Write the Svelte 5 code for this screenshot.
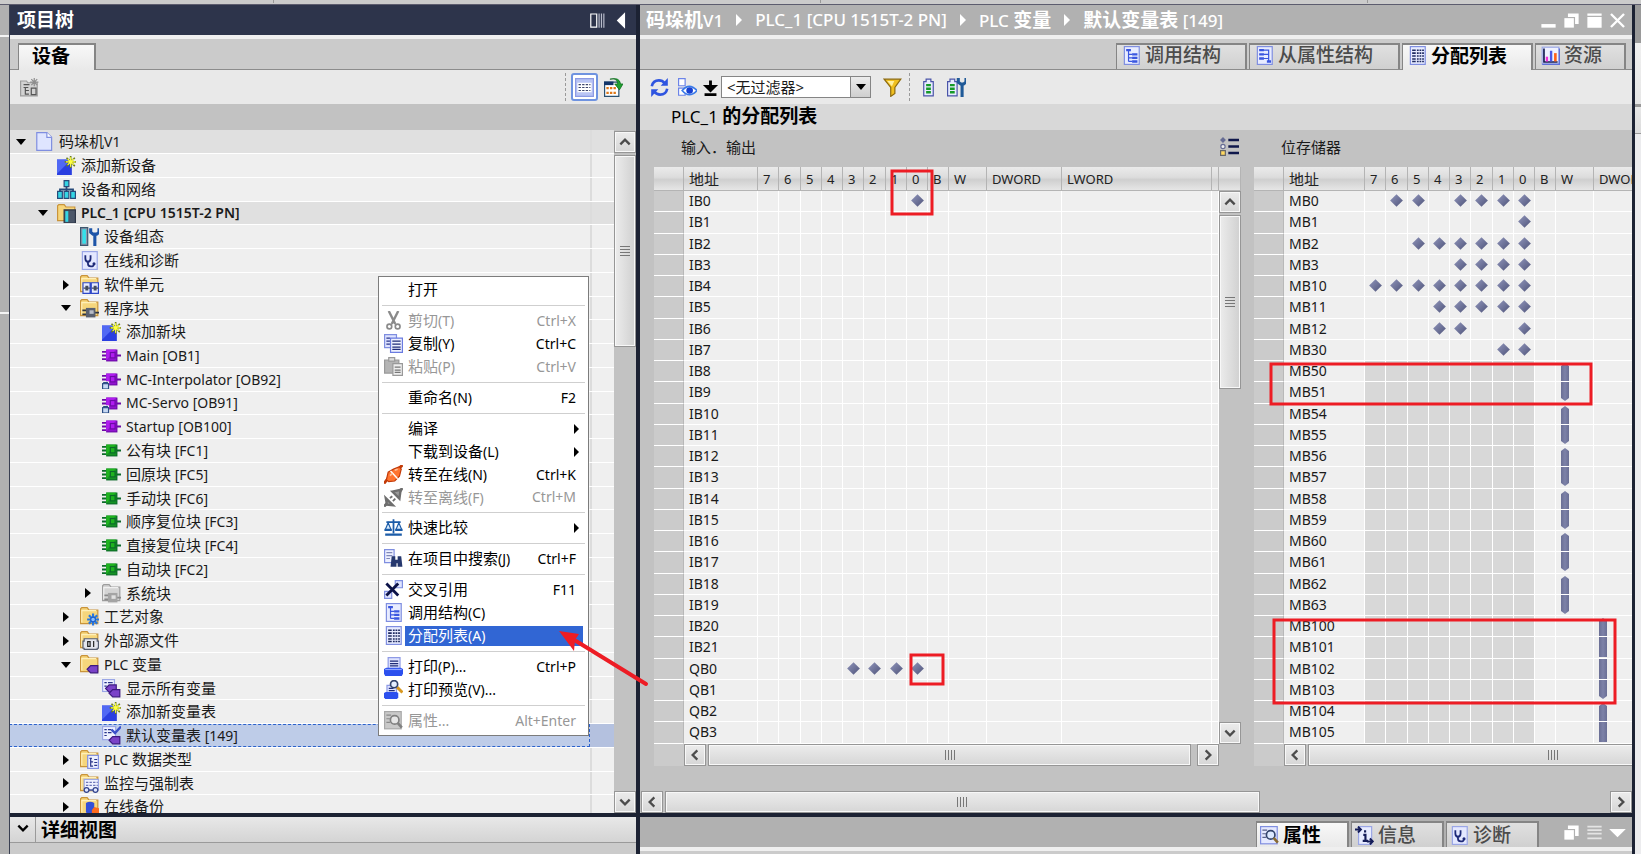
<script lang="ts">
  type TreeNode = { text: string; icon: string; level: number; open?: boolean; head?: boolean; strong?: boolean; selected?: boolean };
  type Row = { addr: string; bits: number[]; col?: string; part?: string };

  const tree: TreeNode[] = [
    { text: '码垛机V1', icon: 'page', level: 0, open: true, head: true },
    { text: '添加新设备', icon: 'add', level: 1 },
    { text: '设备和网络', icon: 'network', level: 1 },
    { text: 'PLC_1 [CPU 1515T-2 PN]', icon: 'plc', level: 1, open: true, head: true, strong: true },
    { text: '设备组态', icon: 'config', level: 2 },
    { text: '在线和诊断', icon: 'diag', level: 2 },
    { text: '软件单元', icon: 'f-unit', level: 2, open: false },
    { text: '程序块', icon: 'f-block', level: 2, open: true },
    { text: '添加新块', icon: 'add', level: 3 },
    { text: 'Main [OB1]', icon: 'ob', level: 3 },
    { text: 'MC-Interpolator [OB92]', icon: 'ob-lock', level: 3 },
    { text: 'MC-Servo [OB91]', icon: 'ob-lock', level: 3 },
    { text: 'Startup [OB100]', icon: 'ob', level: 3 },
    { text: '公有块 [FC1]', icon: 'fc', level: 3 },
    { text: '回原块 [FC5]', icon: 'fc', level: 3 },
    { text: '手动块 [FC6]', icon: 'fc', level: 3 },
    { text: '顺序复位块 [FC3]', icon: 'fc', level: 3 },
    { text: '直接复位块 [FC4]', icon: 'fc', level: 3 },
    { text: '自动块 [FC2]', icon: 'fc', level: 3 },
    { text: '系统块', icon: 'f-system', level: 3, open: false },
    { text: '工艺对象', icon: 'f-tech', level: 2, open: false },
    { text: '外部源文件', icon: 'f-source', level: 2, open: false },
    { text: 'PLC 变量', icon: 'f-tag', level: 2, open: true },
    { text: '显示所有变量', icon: 'tags', level: 3 },
    { text: '添加新变量表', icon: 'add', level: 3 },
    { text: '默认变量表 [149]', icon: 'tagtable', level: 3, selected: true },
    { text: 'PLC 数据类型', icon: 'f-type', level: 2, open: false },
    { text: '监控与强制表', icon: 'f-watch', level: 2, open: false },
    { text: '在线备份', icon: 'f-backup', level: 2, open: false }
  ];

  const menu = [
    [{ text: '打开' }],
    [
      { text: '剪切(T)', key: 'Ctrl+X', icon: 'cut', off: true },
      { text: '复制(Y)', key: 'Ctrl+C', icon: 'copy' },
      { text: '粘贴(P)', key: 'Ctrl+V', icon: 'paste', off: true }
    ],
    [{ text: '重命名(N)', key: 'F2' }],
    [
      { text: '编译', sub: true },
      { text: '下载到设备(L)', sub: true },
      { text: '转至在线(N)', key: 'Ctrl+K', icon: 'online' },
      { text: '转至离线(F)', key: 'Ctrl+M', icon: 'offline', off: true }
    ],
    [{ text: '快速比较', icon: 'scales', sub: true }],
    [{ text: '在项目中搜索(J)', key: 'Ctrl+F', icon: 'find' }],
    [
      { text: '交叉引用', key: 'F11', icon: 'cross' },
      { text: '调用结构(C)', icon: 'calls' },
      { text: '分配列表(A)', icon: 'list', active: true }
    ],
    [
      { text: '打印(P)...', key: 'Ctrl+P', icon: 'print' },
      { text: '打印预览(V)...', icon: 'preview' }
    ],
    [{ text: '属性...', key: 'Alt+Enter', icon: 'props-off', off: true }]
  ] as { text: string; key?: string; icon?: string; off?: boolean; sub?: boolean; active?: boolean }[][];

  const bitNumbers = [7, 6, 5, 4, 3, 2, 1, 0];

  const ioRows: Row[] = [];
  for (let i = 0; i < 22; i++) ioRows.push({ addr: 'IB' + i, bits: i === 0 ? [0] : [] });
  for (let i = 0; i < 4; i++) ioRows.push({ addr: 'QB' + i, bits: i === 0 ? [3, 2, 1, 0] : [] });

  const memRows: Row[] = [
    { addr: 'MB0', bits: [6, 5, 3, 2, 1, 0] },
    { addr: 'MB1', bits: [0] },
    { addr: 'MB2', bits: [5, 4, 3, 2, 1, 0] },
    { addr: 'MB3', bits: [3, 2, 1, 0] },
    { addr: 'MB10', bits: [7, 6, 5, 4, 3, 2, 1, 0] },
    { addr: 'MB11', bits: [4, 3, 2, 1, 0] },
    { addr: 'MB12', bits: [4, 3, 0] },
    { addr: 'MB30', bits: [1, 0] }
  ];
  for (const n of [50, 54, 56, 58, 60, 62]) {
    memRows.push({ addr: 'MB' + n, bits: [], col: 'W', part: 'first' });
    memRows.push({ addr: 'MB' + (n + 1), bits: [], col: 'W', part: 'last' });
  }
  const dwordParts = ['first', 'mid', 'mid', 'last', 'first', 'mid'];
  dwordParts.forEach((part, i) => memRows.push({ addr: 'MB' + (100 + i), bits: [], col: 'DWORD', part }));

  const crumbs = ['码垛机V1', 'PLC_1 [CPU 1515T-2 PN]', 'PLC 变量', '默认变量表 [149]'];
  const tabs = [
    { text: '调用结构', icon: 'calls' },
    { text: '从属性结构', icon: 'depends' },
    { text: '分配列表', icon: 'list' },
    { text: '资源', icon: 'chart' }
  ];
  let activeTab = $state(2);
  let filter = $state('none');

  // Chinese and Latin runs are set in slightly different sizes
  function runs(text: string) {
    return text.match(/[\u2e80-\uffef]+|[^\u2e80-\uffef]+/g) ?? [];
  }
</script>

{#snippet mixed(text: string)}<span class="mixed">{#each runs(text) as run}<span class:cjk={run.charCodeAt(0) > 0x2e7f}>{run}</span>{/each}</span>{/snippet}

{#snippet sheet()}
  <rect x="1" y="1" width="14" height="14" fill="#eef1ff" stroke="#9aa6e6" />
  <path d="M1 15.5h14.5V2" stroke="#5d6fd8" fill="none" />
{/snippet}

{#snippet block(fill: string, dark: string)}
  <path d="M0 5h5M0 8h5M0 11h5M12 8h4" stroke={dark} stroke-width="1.5" />
  <rect x="3.5" y="3" width="9.5" height="10" fill={dark} />
  <rect x="3.5" y="3" width="8.5" height="9" fill={fill} />
  <path d="M3.500 12L12 3v9z" fill={dark} opacity=".45" />
  <rect x="7" y="5.5" width="4" height="4.5" fill={fill} stroke={dark} />
{/snippet}

{#snippet tag(x: number, y: number)}
  <path d="M{x} {y + 3}l3-3h6v6h-6z" fill="#7a42c8" stroke="#3c1980" />
{/snippet}

{#snippet icon(name: string)}
  <svg class="icon" viewBox="0 0 16 16" aria-hidden="true">
    {#if name.startsWith('f-')}
      {@const grey = name === 'f-system'}
      <path d="M.5 14V1.5l1-1H6l1.5 2h7.5V14z" fill={grey ? '#d4d4d4' : '#f6d67c'} stroke={grey ? '#9d9d9d' : '#c9943a'} />
      <path d="M1.5 13V3h12" fill="none" stroke={grey ? '#f0f0f0' : '#fff0b8'} />
    {/if}
    {#if name === 'page'}
      <path d="M1.5.5h8.5l4 4v11h-12.5z" fill="#dfe5ff" stroke="#7f8ee0" />
      <path d="M10 .5v4h4" fill="#fff" stroke="#7f8ee0" />
    {:else if name === 'add'}
      <rect x="0" y="3" width="12.5" height="13" fill="#2a3fe0" />
      <path d="M0 3h12L0 15z" fill="#5068f4" />
      <path d="M11.500 0v10M6.500 5h10M8 1.500l7 7M15 1.500l-7 7" stroke="#6b7d1c" stroke-width="1.400" />
      <path d="M11.500 1v8M7.500 5h8M9 2.500l5 5M14 2.500l-5 5" stroke="#ffff42" />
    {:else if name === 'network'}
      <path d="M8 5v4M2.500 10V8h11v2M8 8v3" stroke="#274b7a" stroke-width="1.500" fill="none" />
      <path d="M6 .5h4v5H6zM.5 9.500h4v6h-4zM6 9.500h4v6H6zM11.500 9.500h4v6h-4z" fill="#35d5e4" stroke="#274b7a" />
    {:else if name === 'plc'}
      <path d="M.5 14V1.500l1-1H6l1.500 2h7.500V14z" fill="#f6d67c" stroke="#c9943a" />
      <path d="M6 5h9.500v11H6z" fill="#4b5668" stroke="#2c3546" />
      <path d="M7 6h2.500v9H7z" fill="#35d5e4" />
    {:else if name === 'config'}
      <path d="M.5.5h6v15h-6z" fill="#8b9bb0" stroke="#3d556d" />
      <path d="M2 2h3v12H2z" fill="#35e0ea" />
      <path d="M9 1v3.500l2 1.500h3l2-1.500V1M12.500 6v10" stroke="#1e55a8" stroke-width="2.600" fill="none" />
    {:else if name === 'diag'}
      <rect x="2" y=".5" width="12.500" height="15" fill="#e4e8ff" stroke="#9aa6e6" />
      <path d="M4.500 3.500v2.500q0 3 2.200 3t2.200-3V3.500M6.700 9v1.500q0 2.500 2.500 2.500t2.300-1.500" stroke="#1e2a78" stroke-width="1.500" fill="none" />
      <circle cx="11.800" cy="10.800" r="1.300" fill="#1e2a78" />
    {:else if name === 'f-unit'}
      <path d="M2.500 6.500h6v9h-6zM9.500 6.500h6v9h-6z" fill="#e8ecff" stroke="#2f48c8" />
      <path d="M3 11h2M6.500 11h2M10 11h2M13.500 11h2" stroke="#444c60" />
      <path d="M4.500 9h2.500v4H4.500zM11.500 9H14v4h-2.500z" fill="#444c60" />
    {:else if name === 'f-block' || name === 'f-system'}
      <path d="M2 9.500h4M2 13h4M12 11.500h4" stroke={name === 'f-block' ? '#2e3440' : '#8a8a8a'} stroke-width="1.500" />
      <rect x="5" y="7.500" width="8" height="8" fill={name === 'f-block' ? '#596070' : '#a4a4a4'} />
      <rect x="8" y="9.500" width="3.500" height="3" fill={name === 'f-block' ? '#b8bcc8' : '#e0e0e0'} />
    {:else if name === 'ob' || name === 'ob-lock'}
      {@render block('#b01cf0', '#6c0aa6')}
      {#if name === 'ob-lock'}
        <path d="M0 9.500h6V16H0z" fill="#efefef" />
        <path d="M1.500 12v-1.500h3V12" stroke="#2a4d84" fill="none" />
        <rect x=".5" y="11.500" width="5" height="4.500" fill="#c7d9f4" stroke="#2a4d84" />
      {/if}
    {:else if name === 'fc'}
      {@render block('#1fb41f', '#0c6a2a')}
    {:else if name === 'f-tech'}
      <path d="M11 5.500v10M6 10.500h10M7.500 7l7 7M14.500 7l-7 7" stroke="#2878e0" stroke-width="1.800" />
      <circle cx="11" cy="10.500" r="2" fill="#8cc0ff" stroke="#2060c8" />
    {:else if name === 'f-source'}
      <path d="M3.500 8.500v-2h11v2h1v6h-1v1h-11v-1h-1v-6z" fill="#e4e6ee" stroke="#555d70" />
      <path d="M6.500 9h2v4h-2zM11.500 8.500v5" fill="none" stroke="#222" />
    {:else if name === 'f-tag'}
      {@render tag(6, 9)}
    {:else if name === 'tags'}
      <rect x=".5" y=".5" width="10" height="10" fill="#eef1ff" stroke="#9aa6e6" />
      <path d="M2 3h2M2 6h2M5 3h4M5 6h4" stroke="#28348a" />
      {@render tag(3, 5)}
      {@render tag(6, 9)}
    {:else if name === 'tagtable'}
      <rect x=".5" y=".5" width="11" height="11" fill="#eef1ff" stroke="#9aa6e6" />
      <path d="M2 3h2M2 5.500h2M2 8h2M5 3h3M5 5.500h3" stroke="#28348a" />
      <path d="M8 3l3 3 5-5.500" stroke="#3b50c8" stroke-width="2" fill="none" />
      {@render tag(6, 9)}
    {:else if name === 'f-type'}
      <rect x="6.500" y="4.500" width="9" height="11" fill="#eef1ff" stroke="#7f8ee0" />
      <path d="M8 7h2M9 7v7M9 10h2M9 13.500h2M12 8h2.500M12 10.500h2.500M12 13h2.500" stroke="#28348a" />
    {:else if name === 'f-watch'}
      <rect x="3.500" y="4.500" width="12" height="9" fill="#eef1ff" stroke="#9aa6e6" />
      <path d="M5 7h10M5 9.500h10" stroke="#6d76b8" stroke-dasharray="2 1" />
      <path d="M6 13.500h8" stroke="#33448c" />
      <circle cx="5.500" cy="13.500" r="2" fill="#dfe6ff" stroke="#33448c" />
      <circle cx="13" cy="13.500" r="2" fill="#dfe6ff" stroke="#33448c" />
    {:else if name === 'f-backup'}
      <path d="M5 5q3.500-2 7 0v8q-3.500 2-7 0z" fill="#3350d8" />
      <path d="M10 11l2-2.500 4 1v6h-6z" fill="#ff6a1c" />
    {:else if name === 'cut'}
      <path d="M4 0l5.500 11M12 0L6.500 11" stroke="#8a8a8a" stroke-width="2" />
      <circle cx="4.500" cy="13" r="2" fill="none" stroke="#8a8a8a" stroke-width="1.400" />
      <circle cx="11.500" cy="13" r="2" fill="none" stroke="#8a8a8a" stroke-width="1.400" />
    {:else if name === 'copy'}
      <path d="M.5.5h10v11H.500z" fill="#dfe4ff" stroke="#7f8ee0" />
      <path d="M2 3.500h3M2 6h3M2 8.500h3" stroke="#28348a" />
      <path d="M5.500 3.500h10v12h-10z" fill="#eef1ff" stroke="#6a7be0" />
      <path d="M7 6h7M7 8.500h7M7 11h7M7 13h7" stroke="#1e2a78" />
    {:else if name === 'paste'}
      <path d="M.5 2.500h12v11H.500z" fill="#b4b4b4" stroke="#999" />
      <rect x="4" y=".5" width="5" height="3" fill="#ddd" stroke="#999" />
      <path d="M7.500 5.500h8v10h-8z" fill="#eee" stroke="#999" />
      <path d="M9 8.500h5M9 11h5M9 13h5" stroke="#777" />
    {:else if name === 'online'}
      <path d="M0 15.500l4-5M12 3.500l3.500-3.500" stroke="#c23a08" stroke-width="2.400" />
      <path d="M2 12.500L3.500 6 8 3.500l5-2 1.500 2-1.500 6-4 4-5 .5z" fill="#ff7430" stroke="#c23a08" />
      <path d="M5.500 5l6 6.500" stroke="#fff" stroke-width="1.200" />
      <path d="M5 9l2-2M9 4.500l2.500-1" stroke="#ffc09a" stroke-width="1.400" />
    {:else if name === 'offline'}
      <path d="M0 15.500l3-3M13 3.500l2.500-3.500" stroke="#6e6e6e" stroke-width="2.400" />
      <path d="M1.500 8.500l6 6-5-.500z" fill="#999" stroke="#6e6e6e" stroke-width="2" />
      <path d="M7 3l7-1.500-1 7.500z" fill="#999" stroke="#6e6e6e" stroke-width="2" />
      <path d="M5 8.500l2-1.500M7.500 11l2-2" stroke="#6e6e6e" stroke-width="1.600" />
    {:else if name === 'scales'}
      <path d="M8 1v12M2 3.500h12" stroke="#1c5ca8" stroke-width="1.500" />
      <path d="M3.500 4L1 10h5zM12.500 4L10 10h5z" fill="#d8ecff" stroke="#1c5ca8" />
      <path d="M.5 10h6M9.500 10h6M1 14h14" stroke="#1c5ca8" stroke-width="2" />
    {:else if name === 'find'}
      <path d="M.5.5h8v11h-8z" fill="#eef1ff" stroke="#7f8ee0" />
      <path d="M2 3h5M2 5.500h5M2 8h3" stroke="#8088b8" />
      <path d="M6.500 6h3v3h2V6h3l1 9h-4v-3h-1v3H5.500z" fill="#26386e" />
    {:else if name === 'cross'}
      <path d="M9.500.5h6v6h-6zM.5 9.500h6v6h-6z" fill="#dfe4ff" stroke="#7f8ee0" />
      <path d="M2 3l10 10M12 3L2 13" stroke="#0c1248" stroke-width="2.400" />
    {:else if name === 'calls'}
      <rect x="2" y=".5" width="12.500" height="15" fill="#e8ecff" stroke="#7f8ee0" />
      <path d="M5.500 4v9M5.500 7h3M5.500 10h3M5.500 13h3" stroke="#3a56e0" fill="none" />
      <path d="M3.500 2.500h4v2h-4zM8.500 6h4.500v2H8.500zM8.500 9h4.500v2H8.500zM8.500 12h4.500v2H8.500z" fill="#3a56e0" />
    {:else if name === 'depends'}
      <rect x="2" y=".5" width="12.500" height="15" fill="#e8ecff" stroke="#7f8ee0" />
      <path d="M7 3.500h4.500v9H12M7 7h4.500M7 10.500h4.500" stroke="#3a56e0" fill="none" />
      <path d="M3.500 2.500h4v2h-4zM3.500 6h4v2h-4zM3.500 9.500h4v2h-4zM10 12h3.500v2H10z" fill="#3a56e0" />
    {:else if name === 'list'}
      <rect x="2" y=".5" width="12.500" height="15" fill="#e8ecff" stroke="#7f8ee0" />
      <path d="M3.500 3.500h3M3.500 6h3M3.500 8.500h3M3.500 11h3M3.500 13h3" stroke="#1e2a60" stroke-width="1.300" />
      <path d="M7.500 3.500h6M7.500 6h6M7.500 8.500h6M7.500 11h6M7.500 13h6" stroke="#1e2a60" stroke-dasharray="1.500 .7" stroke-width="1.300" />
    {:else if name === 'chart'}
      {@render sheet()}
      <path d="M2.500 2v11.500H14" stroke="#111a50" stroke-width="1.400" fill="none" />
      <path d="M4 9h2v4H4z" fill="#f030d8" /><path d="M7.500 4h2v9h-2z" fill="#4a58e8" /><path d="M11 6h2.200v7H11z" fill="#ff6018" />
    {:else if name === 'print'}
      <path d="M3.500.5h10v10h-10z" fill="#dfe4ff" stroke="#8e9ae6" />
      <path d="M5 3.500h7M5 5.500h7M5 7.500h7" stroke="#1e2a78" />
      <path d="M0 10l2-1h12l2 1v4l-1 2H1l-1-2z" fill="#2c50ee" />
      <path d="M1 10.500h14" stroke="#8ea4ff" />
    {:else if name === 'preview'}
      <path d="M2.500 4.500h8v7h-8z" fill="#dfe4ff" stroke="#8e9ae6" />
      <path d="M4 7h4M4 9h5" stroke="#1e2a78" />
      <path d="M0 11l1.500-1h9l1.500 1v3.500L11 16H1l-1-1.500z" fill="#2c50ee" />
      <path d="M11 6l4.500 4.500" stroke="#d89820" stroke-width="2.400" />
      <circle cx="8.500" cy="3.500" r="3" fill="#e4eeff" stroke="#33446c" stroke-width="1.400" />
    {:else if name === 'props' || name === 'props-off'}
      {@const off = name === 'props-off'}
      <rect x=".5" y=".5" width="14" height="14.500" fill={off ? '#c9c9c9' : '#e4e8ff'} stroke={off ? '#a8a8a8' : '#7f8ee0'} />
      <path d="M2 3.500h4M2 6.500h3M2 9.500h3" stroke={off ? '#8a8a8a' : '#5a6088'} />
      <circle cx="9" cy="7.500" r="3.600" fill={off ? '#e6e6e6' : '#dce8ff'} stroke={off ? '#808080' : '#33446c'} stroke-width="1.400" />
      <path d="M11.500 10l3.500 4" stroke={off ? '#808080' : '#8a6a30'} stroke-width="2.200" />
    {:else if name === 'info'}
      <rect x="3" y=".5" width="11" height="15" fill="#e8ecff" stroke="#9aa6e6" />
      <path d="M0 3h4.500M2.500 .5L5 3 2.500 5.500M10 13h5M12.500 10.500L15 13l-2.500 2.500" stroke="#141c58" stroke-width="1.600" fill="none" />
      <path d="M8.500 3.500v2M7 7.500h1.800V12M6.500 12.500h4.500" stroke="#141c58" stroke-width="1.800" fill="none" />
    {:else if name === 'new-off'}
      <path d="M.5 15V2.500h5l1 1.500h8v11z" fill="#d2d2d2" stroke="#9c9c9c" />
      <path d="M3 5.500h5M3 8h4M4.500 8v5.500h3M4.500 10.500h3M9.500 8.500h4v5.500h-4z" stroke="#555" fill="none" />
      <path d="M12 0v7M8.500 3.500h7M9.500 1l5 5M14.500 1l-5 5" stroke="#8e8e8e" />
    {:else if name === 'view'}
      <path d="M.5.5h15v15H.5z" fill="#b9c4f4" stroke="#8c9ae4" />
      <path d="M2 4h12v8H2z" fill="#fff" />
      <path d="M3 5.500h10M3 8h10M3 10.500h10" stroke="#3d466c" stroke-dasharray="2 1" />
    {:else if name === 'goto'}
      <path d="M.5 3.500h12v12H.500z" fill="#fff" stroke="#2a5070" />
      <path d="M0 3h8v3H0z" fill="#123468" />
      <path d="M2 8.500h8M2 12.500h8" stroke="#e07818" stroke-width="2" stroke-dasharray="2 1" />
      <path d="M5 1q6-1.500 6.500 4H9l4 5 3-5h-2Q13-1 5 1z" fill="#20a030" stroke="#0c6a1c" stroke-width=".6" />
    {:else if name === 'refresh'}
      <path d="M1.500 7q1-5 6-5 3 0 5 2.500M14.500 9q-1 5-6 5-3 0-5-2.500" stroke="#2f55e0" stroke-width="2.200" fill="none" />
      <path d="M15 0v6.500H9zM1 16V9.500h6z" fill="#2f55e0" />
    {:else if name === 'eye'}
      <path d="M.5 .5H6v6H.500zM.5 8.500H6v6H.500z" fill="#fff" stroke="#6c84e8" />
      <path d="M3.500 10.500q6-7 12.500 0-6.500 7-12.500 0z" fill="#fff" stroke="#3a7ae8" stroke-width="1.400" />
      <circle cx="9.800" cy="10.500" r="2.800" fill="#1840d0" />
    {:else if name === 'down'}
      <path d="M8 2v5M4.500 7h7L8 10.500zM3 14h10" fill="#000" stroke="#000" stroke-width="2.400" />
    {:else if name === 'funnel'}
      <path d="M1 1h14l-5 7v5l-3.500 2.500V8z" fill="#f0c020" stroke="#8c6a10" />
      <path d="M3.500 2.500h6L7.500 7z" fill="#fff0a0" />
    {:else if name === 'battery' || name === 'battery-tool'}
      {@const x = name === 'battery' ? 4 : 0.5}
      <path d="M{x} 3h2V1h4v2h2v12h-8z" fill="#e8ecff" stroke="#4a54a8" />
      <path d="M{x + 2} 6h4M{x + 2} 9h4M{x + 2} 12h4" stroke="#169a28" stroke-width="2" />
      {#if name === 'battery-tool'}
        <path d="M9.500 0v3.500l2 1.500h2.500l2-1.500V0M12.700 5v11" stroke="#205a98" stroke-width="2.600" fill="none" />
      {/if}
    {:else if name === 'legend'}
      <path d="M7 2.500h9M7 8h9M7 13.500h9" stroke="#10184c" stroke-width="2" />
      <path d="M2.500 0L5 2.500 2.500 5 0 2.500z" fill="#666c94" />
      <circle cx="2.500" cy="8" r="1.800" fill="#eee" stroke="#666c94" />
      <path d="M.5 11.500h4v4h-4z" fill="#ffd860" stroke="#666" />
    {:else if name === 'split'}
      <path d="M1.500 2.500h5v11h-5z" fill="none" stroke="#fff" />
      <path d="M8.500 2v12M10.500 2v12M12.500 2v12" stroke="#b8bccb" />
    {:else if name === 'collapse'}
      <path d="M11 1v14L4 8z" fill="#fff" />
    {:else if name === 'min'}
      <path d="M2 11h12v3H2z" fill="#fff" />
    {:else if name === 'restore'}
      <path d="M5 2h9v9h-3V5H5z" fill="#fff" /><path d="M2 6h8v8H2z" fill="#fff" />
    {:else if name === 'max'}
      <path d="M2 2h12v2H2zM2 5h12v9H2z" fill="#fff" />
    {:else if name === 'close'}
      <path d="M2.500 2.500l11 11M13.500 2.500l-11 11" stroke="#fff" stroke-width="2" />
    {:else if name === 'lines'}
      <path d="M2 3h12M2 6h12M2 9h12M2 13h12" stroke="#e4e4e4" stroke-width="1.500" />
    {:else if name === 'drop'}
      <path d="M1 5h14l-7 7z" fill="#fff" />
    {/if}
  </svg>
{/snippet}

{#snippet arrowButton(dir: string, label: string)}
  <button class="sb-btn" aria-label={label}>
    <svg class={dir} viewBox="0 0 12 12" aria-hidden="true"><path d="M2 8l4-4 4 4" /></svg>
  </button>
{/snippet}

{#snippet addressTable(title: string, rows: Row[], kind: string)}
  <section class="block {kind}">
    <h3>
      {@render mixed(title)}
      {#if kind === 'io'}
        <button class="legend" aria-label="图例">{@render icon('legend')}</button>
      {/if}
    </h3>
    <div class="grid-area">
      <table>
        <colgroup>
          <col class="c-gutter" /><col class="c-addr" />
          {#each bitNumbers as bit}<col class="c-bit" class:wide={bit === 6 || bit === 2} />{/each}
          <col class="c-bit" /><col class="c-w" /><col class="c-dw" /><col class="c-lw" /><col class="c-end" />
        </colgroup>
        <thead>
          <tr>
            <th></th>
            <th class="addr-head">地址</th>
            {#each bitNumbers as bit}<th>{bit}</th>{/each}
            <th>B</th><th>W</th><th>DWORD</th><th>LWORD</th><th></th>
          </tr>
        </thead>
        <tbody>
          {#each rows as row}
            <tr>
              <td class="gutter"></td>
              <td class="addr">{row.addr}</td>
              {#each bitNumbers as bit}
                <td class:taken={row.col}>
                  {#if row.bits.includes(bit)}<i class="dot"></i>{/if}
                </td>
              {/each}
              <td></td>
              <td>{#if row.col === 'W'}<i class="bar {row.part}"></i>{/if}</td>
              <td>{#if row.col === 'DWORD'}<i class="bar {row.part}"></i>{/if}</td>
              <td></td>
              <td></td>
            </tr>
          {/each}
        </tbody>
      </table>
      <div class="side">
        <div class="side-head"></div>
        <div class="vbar">
          {@render arrowButton('up', '向上滚动')}
          <div class="thumb"><i class="grip"></i></div>
          {@render arrowButton('down', '向下滚动')}
        </div>
      </div>
    </div>
    <div class="hrow">
      <div class="corner"></div>
      <div class="hbar">
        {@render arrowButton('left', '向左滚动')}
        <div class="thumb"><i class="grip"></i></div>
        {@render arrowButton('right', '向右滚动')}
      </div>
    </div>
  </section>
{/snippet}

<div class="app">
  <div class="ribbon"><i></i><i></i><i></i></div>
  <div class="desk">
    <div class="left-rail"></div>

    <aside class="project">
      <header class="title dark">
        <h2>项目树</h2>
        <button class="win" aria-label="分栏">{@render icon('split')}</button>
        <button class="win" aria-label="折叠">{@render icon('collapse')}</button>
      </header>
      <div class="tabs left"><button class="tab on">设备</button></div>
      <div class="toolbar">
        <button class="tool" aria-label="新建">{@render icon('new-off')}</button>
        <span class="push"></span>
        <span class="rule"></span>
        <button class="tool framed" aria-label="列表视图">{@render icon('view')}</button>
        <button class="tool" aria-label="转到">{@render icon('goto')}</button>
      </div>
      <div class="band"></div>

      <div class="tree-wrap">
        <ul class="tree">
          {#each tree as node}
            <li class:head={node.head} class:selected={node.selected}>
              <div class="name level{node.level}">
                <span class="twist">
                  {#if node.open !== undefined}
                    <button class:open={node.open} aria-label="展开或折叠"></button>
                  {/if}
                </span>
                {@render icon(node.icon)}
                <span class="label" class:strong={node.strong}>{@render mixed(node.text)}</span>
              </div>
              <div class="status"></div>
            </li>
          {/each}
        </ul>
        <div class="vbar tree-bar">
          {@render arrowButton('up', '向上滚动')}
          <div class="thumb"><i class="grip"></i></div>
          {@render arrowButton('down', '向下滚动')}
        </div>
      </div>

      <footer class="details">
        <button class="fold" aria-label="展开详细视图">
          <svg viewBox="0 0 12 12" aria-hidden="true"><path d="M2 4l4 4 4-4" /></svg>
        </button>
        <h2>详细视图</h2>
      </footer>

      <ul class="menu">
        {#each menu as group, i}
          {#if i > 0}<li class="sep"></li>{/if}
          {#each group as item}
            <li class="item">
              <button class:active={item.active} disabled={item.off}>
                <span class="menu-icon">{#if item.icon}{@render icon(item.icon)}{/if}</span>
                <span class="menu-text">
                  {@render mixed(item.text)}
                  {#if item.key}<kbd>{item.key}</kbd>{/if}
                  {#if item.sub}<i class="more"></i>{/if}
                </span>
              </button>
            </li>
          {/each}
        {/each}
      </ul>
    </aside>

    <main class="editor">
      <header class="title grey">
        <nav>
          {#each crumbs as crumb, i}
            {#if i > 0}<i class="crumb-arrow"></i>{/if}
            <a href="#crumb{i}">{@render mixed(crumb)}</a>
          {/each}
        </nav>
        {#each ['min', 'restore', 'max', 'close'] as name}
          <button class="win" aria-label={name}>{@render icon(name)}</button>
        {/each}
      </header>
      <div class="tabs right">
        {#each tabs as tab, i}
          <button class="tab tab{i}" class:on={i === activeTab} onclick={() => (activeTab = i)}>
            {@render icon(tab.icon)}{tab.text}
          </button>
        {/each}
      </div>
      <div class="toolbar">
        <button class="tool" aria-label="刷新">{@render icon('refresh')}</button>
        <button class="tool" aria-label="视图选项">{@render icon('eye')}</button>
        <button class="tool small" aria-label="更多">{@render icon('down')}</button>
        <div class="pick">
          <select aria-label="过滤器" bind:value={filter}>
            <option value="none">&lt;无过滤器&gt;</option>
          </select>
          <span class="pick-arrow"></span>
        </div>
        <button class="tool filter" aria-label="过滤">{@render icon('funnel')}</button>
        <span class="rule"></span>
        <button class="tool" aria-label="保持性">{@render icon('battery')}</button>
        <button class="tool" aria-label="保持性设置">{@render icon('battery-tool')}</button>
      </div>
      <h1>{@render mixed('PLC_1 的分配列表')}</h1>

      <div class="blocks">
        {@render addressTable('输入．输出', ioRows, 'io')}
        {@render addressTable('位存储器', memRows, 'mem')}
      </div>

      <div class="hbar page-bar">
        {@render arrowButton('left', '向左滚动')}
        <div class="thumb"><i class="grip"></i></div>
        <span class="push"></span>
        {@render arrowButton('right', '向右滚动')}
      </div>

      <footer class="inspector">
        <div class="inspector-tabs">
          <button class="tab on">{@render icon('props')}属性</button>
          <button class="tab">{@render icon('info')}信息</button>
          <button class="tab">{@render icon('diag')}诊断</button>
          {#each ['restore', 'lines', 'drop'] as name}
            <button class="win" aria-label={name}>{@render icon(name)}</button>
          {/each}
        </div>
      </footer>
    </main>

    <div class="right-rail"></div>
  </div>

  <svg class="marks" aria-hidden="true">
    <rect x="892" y="171" width="40" height="43" />
    <rect x="911" y="655" width="32" height="29" />
    <rect x="1271" y="364" width="320" height="40" />
    <rect x="1274" y="620" width="341" height="83" />
    <path class="shaft" d="M646 684L576 641" />
    <path class="tip" d="M559 631l20 3-4 6-1 11z" />
  </svg>
</div>

<style>
  :global(body) {
    overflow: hidden;
  }

  .app {
    position: relative;
    display: flex;
    flex-direction: column;
    height: 100vh;
    background: #cbcbcb;
    color: #1a1a1a;
    font-family: 'Noto Sans', 'Noto Sans CJK SC', sans-serif;
    font-size: 14px;
    line-height: 20px;
  }

  button {
    margin: 0;
    padding: 0;
    border: 0;
    background: none;
    color: inherit;
    font: inherit;
    cursor: pointer;
  }

  h1, h2, h3, ul {
    margin: 0;
    padding: 0;
    font-weight: 400;
    list-style: none;
  }

  .icon {
    display: block;
    flex: none;
    width: 19px;
    height: 19px;
  }

  .mixed {
    white-space: pre;
  }

  .cjk {
    font-size: 15px;
  }

  .push {
    flex: 1;
  }

  /* frame */
  .ribbon {
    display: flex;
    justify-content: space-around;
    height: 5px;
    border-bottom: 1px solid #5c5c6e;
    box-sizing: border-box;
    flex: none;
  }

  .ribbon i {
    width: 1px;
    height: 3px;
    background: #999;
  }

  .desk {
    display: flex;
    flex: 1;
    min-height: 0;
  }

  .left-rail {
    width: 9px;
    background: linear-gradient(#b1b1b1 30px, #f4f4f4 30px, #f4f4f4 32px, #b1b1b1 32px, #b1b1b1 307px, #f4f4f4 307px, #f4f4f4 309px, #b1b1b1 309px);
  }

  .right-rail {
    width: 6px;
    background: linear-gradient(#9a9a9a 38px, #f0f0f0 38px, #e6e6e6 99px, #999 99px, #999 102px, #e8e8e8 102px, #dcdcdc 128px, #999 128px, #999 129px, #ececee 129px);
  }

  .project {
    position: relative;
    display: flex;
    flex-direction: column;
    flex: none;
    width: 626px;
    border-right: 4px solid #1c2233;
    border-left: 1px solid #3a4052;
  }

  .editor {
    display: flex;
    flex-direction: column;
    flex: 1;
    min-width: 0;
    border-right: 3px solid #1c2233;
    background: #c2c2c2;
  }

  .title {
    display: flex;
    align-items: center;
    height: 30px;
    padding: 0 3px 0 6px;
    border-bottom: 4px solid #efefef;
    flex: none;
    color: #fff;
  }

  .title.dark {
    background: #2d344b;
  }

  .title.grey {
    background: #b1b1b1;
    font-size: 17px;
    font-weight: 500;
  }

  .title h2 {
    flex: 1;
    padding-left: 1px;
    font-size: 19px;
    font-weight: 700;
    line-height: 28px;
  }

  .title .cjk {
    font-size: 19px;
    font-weight: 700;
  }

  nav {
    display: flex;
    align-items: center;
    flex: 1;
    gap: 13px;
  }

  nav a {
    color: #fff;
    text-decoration: none;
  }

  .crumb-arrow {
    border: 6px solid transparent;
    border-right-width: 0;
    border-left-color: #fff;
  }

  .win {
    display: grid;
    place-items: center;
    width: 23px;
    height: 24px;
  }

  /* tabs */
  .tabs {
    display: flex;
    align-items: flex-end;
    height: 31px;
    flex: none;
    box-sizing: border-box;
    border-bottom: 1px solid #8c8c8c;
    background: #cbcbcb;
  }

  .tabs.left {
    padding-left: 8px;
  }

  .tabs.right {
    justify-content: flex-end;
    gap: 2px;
    padding-right: 6px;
  }

  .tab {
    display: flex;
    align-items: center;
    gap: 4px;
    height: 26px;
    padding: 0 5px;
    border: 1px solid #858585;
    border-width: 2px 2px 0 1px;
    background: linear-gradient(#e0e0e0, #d0d0d0);
    color: #4c4c4c;
    font-size: 19px;
    font-weight: 500;
    line-height: 22px;
    white-space: nowrap;
  }

  .tab.on {
    background: linear-gradient(#f8f8f8, #e9e9e9);
    color: #000;
    font-weight: 700;
  }

  .tabs .tab {
    padding-bottom: 4px;
  }

  .tabs .tab.on {
    height: 27px;
    margin-bottom: -1px;
  }

  .tabs.left .tab {
    width: 78px;
    padding-left: 13px;
  }

  .tab0, .tab2 {
    width: 131px;
  }

  .tab1 {
    width: 151px;
  }

  .tab3 {
    width: 91px;
  }

  .toolbar {
    display: flex;
    align-items: center;
    height: 34px;
    flex: none;
    padding: 0 9px 0 5px;
    background: #e9e9e9;
  }

  .tool {
    display: grid;
    place-items: center;
    width: 28px;
    height: 28px;
  }

  .project .toolbar {
    gap: 1px;
  }

  .tool.small {
    width: 12px;
    margin-right: 8px;
  }

  .tool.filter {
    margin: 0 3px 0 7px;
  }

  .editor .rule {
    margin-right: 4px;
  }

  .tool.framed {
    width: 27px;
    border: 2px solid #6f93e0;
    border-radius: 3px;
    background: #fff;
    box-sizing: border-box;
  }

  .rule {
    width: 5px;
    height: 28px;
    border-left: 1px dashed #9a9a9a;
    box-sizing: border-box;
  }

  .editor .rule {
    width: 1px;
  }

  .band {
    height: 26px;
    flex: none;
    background: #c2c2c2;
  }

  .pick {
    position: relative;
    display: flex;
  }

  select {
    width: 150px;
    height: 22px;
    padding: 0 24px 0 5px;
    border: 1px solid #858585;
    border-radius: 0;
    appearance: none;
    background: #fff;
    color: #1a1a1a;
    font: 15px/20px 'Noto Sans', 'Noto Sans CJK SC', sans-serif;
  }

  .pick-arrow {
    position: absolute;
    top: 1px;
    right: 1px;
    display: grid;
    place-items: center;
    width: 19px;
    height: 20px;
    border-left: 1px solid #858585;
    background: linear-gradient(#ececec, #cfcfcf);
    pointer-events: none;
  }

  .pick-arrow::before {
    content: '';
    border: 5px solid transparent;
    border-top: 6px solid #000;
    border-bottom: 0;
  }

  h1 {
    height: 26px;
    flex: none;
    padding-left: 31px;
    background: #d8d8d8;
    color: #000;
    font-size: 17px;
    line-height: 25px;
  }

  h1 .cjk {
    font-size: 19px;
    font-weight: 700;
  }

  /* project tree */
  .tree-wrap {
    display: flex;
    flex: 1;
    min-height: 0;
    overflow: hidden;
    background: #efefef;
  }

  .tree {
    flex: 1;
  }

  .tree li {
    display: flex;
    height: 24px;
    box-sizing: border-box;
    border-bottom: 1px solid #fff;
    background: #efefef;
  }

  .tree li:nth-child(4n) {
    height: 23px;
  }

  .tree li.head {
    background: #e0e0e0;
  }

  .tree li.selected {
    background: #becce8;
  }

  .name {
    display: flex;
    align-items: center;
    flex: 1;
    padding-left: 2px;
  }

  .level1 {
    padding-left: 24px;
  }

  .level2 {
    padding-left: 47px;
  }

  .level3 {
    padding-left: 69px;
  }

  .selected .name {
    margin-left: -1px;
    border: 1px dashed #2c62cc;
  }

  .twist {
    display: grid;
    place-items: center;
    width: 18px;
    margin-right: 5px;
  }

  .twist button {
    border: 5px solid transparent;
    border-right-width: 0;
    border-left: 6px solid #000;
  }

  .twist button.open {
    border: 5px solid transparent;
    border-top: 6px solid #000;
    border-bottom: 0;
  }

  .label {
    margin-left: 5px;
  }

  .label.strong {
    font-weight: 600;
  }

  .status {
    width: 24px;
    border-left: 2px solid #dcdcdc;
    box-sizing: border-box;
  }

  .selected .status {
    border-left-color: #b4c1df;
    background: #b4c1df;
  }

  /* scroll bars */
  .vbar {
    display: flex;
    flex-direction: column;
    gap: 2px;
    width: 22px;
    background: #c2c2c2;
  }

  .hbar {
    display: flex;
    gap: 2px;
    height: 22px;
    flex: none;
    background: #c2c2c2;
  }

  .sb-btn, .thumb {
    display: grid;
    place-items: center;
    box-sizing: border-box;
    border: 1px solid #969696;
    background: linear-gradient(#ececec, #d6d6d6);
    box-shadow: inset 0 0 0 1px #f8f8f8;
  }

  .sb-btn {
    width: 22px;
    height: 22px;
    flex: none;
  }

  .sb-btn svg, .fold svg {
    width: 14px;
    height: 14px;
    fill: none;
    stroke: #4c4c4c;
    stroke-width: 2;
  }

  .sb-btn .down {
    transform: rotate(180deg);
  }

  .sb-btn .left {
    transform: rotate(-90deg);
  }

  .sb-btn .right {
    transform: rotate(90deg);
  }

  .vbar .thumb {
    height: 174px;
    margin-bottom: auto;
    background: linear-gradient(90deg, #ececec, #d0d0d0);
  }

  .tree-bar .thumb {
    height: 192px;
  }

  .tree-bar {
    padding-top: 1px;
  }

  .hbar .thumb {
    flex: 1;
  }

  .grip {
    width: 10px;
    height: 10px;
    background: repeating-linear-gradient(90deg, #777 0 1px, transparent 1px 3px);
  }

  .vbar .grip {
    background: repeating-linear-gradient(#777 0 1px, transparent 1px 3px);
  }

  .page-bar {
    padding-left: 1px;
  }

  .page-bar .thumb {
    flex: 0 0 60%;
  }

  .details {
    display: flex;
    height: 25px;
    flex: none;
    margin-bottom: 11px;
    border-top: 4px solid #1c2233;
    border-bottom: 1px solid #9a9a9a;
    background: linear-gradient(#e8e8e8, #d4d4d4);
  }

  .fold {
    width: 26px;
    border-right: 1px solid #9a9a9a;
  }

  .fold svg {
    stroke: #000;
  }

  .details h2 {
    padding-left: 5px;
    color: #000;
    font-size: 19px;
    font-weight: 700;
    line-height: 26px;
  }

  /* context menu */
  .menu {
    position: absolute;
    top: 271px;
    left: 368px;
    z-index: 2;
    width: 211px;
    box-sizing: border-box;
    padding: 1px 3px 3px;
    border: 1px solid #7c7c7c;
    background: #fff;
    color: #000;
  }

  .sep {
    display: flex;
    align-items: center;
    height: 8px;
  }

  .sep::before {
    content: '';
    flex: 1;
    height: 1px;
    background: #cfcfcf;
  }

  .item {
    height: 23px;
  }

  .item + .item + .item + .item {
    height: 22px;
  }

  .item button {
    display: flex;
    align-items: center;
    width: 100%;
    height: 100%;
    text-align: left;
  }

  .item button:disabled {
    color: #979797;
  }

  .menu-icon {
    width: 21px;
    margin-left: 2px;
  }

  .menu-text {
    display: flex;
    flex: 1;
    align-items: center;
    height: 20px;
    margin-right: 2px;
    padding: 0 7px 0 3px;
  }

  .active .menu-text {
    background: #3166d4;
    color: #fff;
  }

  kbd {
    margin-left: auto;
    font: inherit;
  }

  .more {
    margin: 0 -3px 0 auto;
    border: 5px solid transparent;
    border-right: 0;
    border-left-color: #000;
  }

  /* assignment list */
  .blocks {
    display: flex;
    gap: 13px;
    flex: 1;
    min-height: 0;
    padding-left: 14px;
    overflow: hidden;
  }

  .block {
    flex: none;
  }

  h3 {
    display: flex;
    align-items: center;
    height: 37px;
    box-sizing: border-box;
    padding: 0 0 4px 27px;
  }

  .legend {
    margin-right: 2px;
    margin-left: auto;
  }

  .grid-area, .hrow {
    display: flex;
  }

  table {
    border-collapse: separate;
    border-spacing: 0;
    table-layout: fixed;
    width: 0;
  }

  .c-gutter { width: 30px; }
  .c-addr { width: 74px; }
  .mem .c-addr { width: 81px; }
  .c-bit { width: 21px; }
  .c-bit.wide { width: 22px; }
  .c-w { width: 38px; }
  .c-dw { width: 75px; }
  .c-lw { width: 150px; }
  .c-end { width: 7px; }

  th, .side-head {
    height: 24px;
    box-sizing: border-box;
    border-right: 1px solid #b4b4b4;
    border-bottom: 1px solid #b4b4b4;
    background: linear-gradient(#ebebeb, #dcdcdc 45%, #cfcfcf 55%, #e6e6e6);
  }

  th {
    padding: 0 0 0 5px;
    color: #222;
    font-size: 13px;
    font-weight: 400;
    line-height: 20px;
    text-align: left;
  }

  th.addr-head {
    font-size: 15px;
  }

  td {
    height: 21px;
    box-sizing: border-box;
    padding: 0;
    border-right: 1px solid #fff;
    border-bottom: 1px solid #fff;
    background: #efefef;
    line-height: 20px;
    vertical-align: top;
  }

  tr:nth-child(4n + 2) td {
    height: 22px;
  }

  .gutter {
    border-right-color: #b8b8b8;
    background: #cbcbcb;
  }

  .addr {
    padding-left: 5px;
  }

  .taken {
    background: #d8d8d8;
  }

  .dot {
    display: block;
    width: 9px;
    height: 9px;
    margin: 5px auto 0;
    background: linear-gradient(90deg, #8085ab, #5f648a);
    transform: rotate(45deg);
  }

  .bar {
    display: block;
    width: 8px;
    height: 20px;
    margin-left: 5px;
    background: linear-gradient(90deg, #6a6f95, #7d82a8, #6a6f95);
  }

  .bar.first {
    height: 18px;
    margin-top: 2px;
    clip-path: polygon(50% 0, 100% 3px, 100% 100%, 0 100%, 0 3px);
  }

  .bar.last {
    height: 19px;
    clip-path: polygon(0 0, 100% 0, 100% 16px, 50% 100%, 0 16px);
  }

  .side {
    display: flex;
    flex-direction: column;
    width: 22px;
  }

  .side .vbar {
    flex: 1;
  }

  .corner {
    width: 30px;
    background: #cbcbcb;
  }

  .hrow .hbar {
    flex: 1;
    margin-right: 22px;
  }

  .hrow .thumb {
    margin-right: 4px;
  }

  .inspector {
    height: 37px;
    flex: none;
    border-top: 4px solid #1c2233;
    background: #cbcbcb;
  }

  .inspector-tabs {
    display: flex;
    align-items: flex-end;
    justify-content: flex-end;
    gap: 2px;
    height: 30px;
    padding-right: 4px;
    border-bottom: 4px solid #efefef;
    background: #b1b1b1;
  }

  .inspector .tab {
    width: 93px;
    padding-left: 3px;
  }

  .inspector .win {
    width: 21px;
    height: 29px;
  }

  .inspector .tab + .win {
    margin-left: 20px;
  }

  /* red highlights */
  .marks {
    position: absolute;
    inset: 0;
    z-index: 3;
    width: 100%;
    height: 100%;
    pointer-events: none;
  }

  .marks rect {
    fill: none;
    stroke: #ed1c24;
    stroke-width: 3;
  }

  .shaft {
    stroke: #ed1c24;
    stroke-width: 4;
    stroke-linecap: round;
  }

  .tip {
    fill: #ed1c24;
  }
</style>
